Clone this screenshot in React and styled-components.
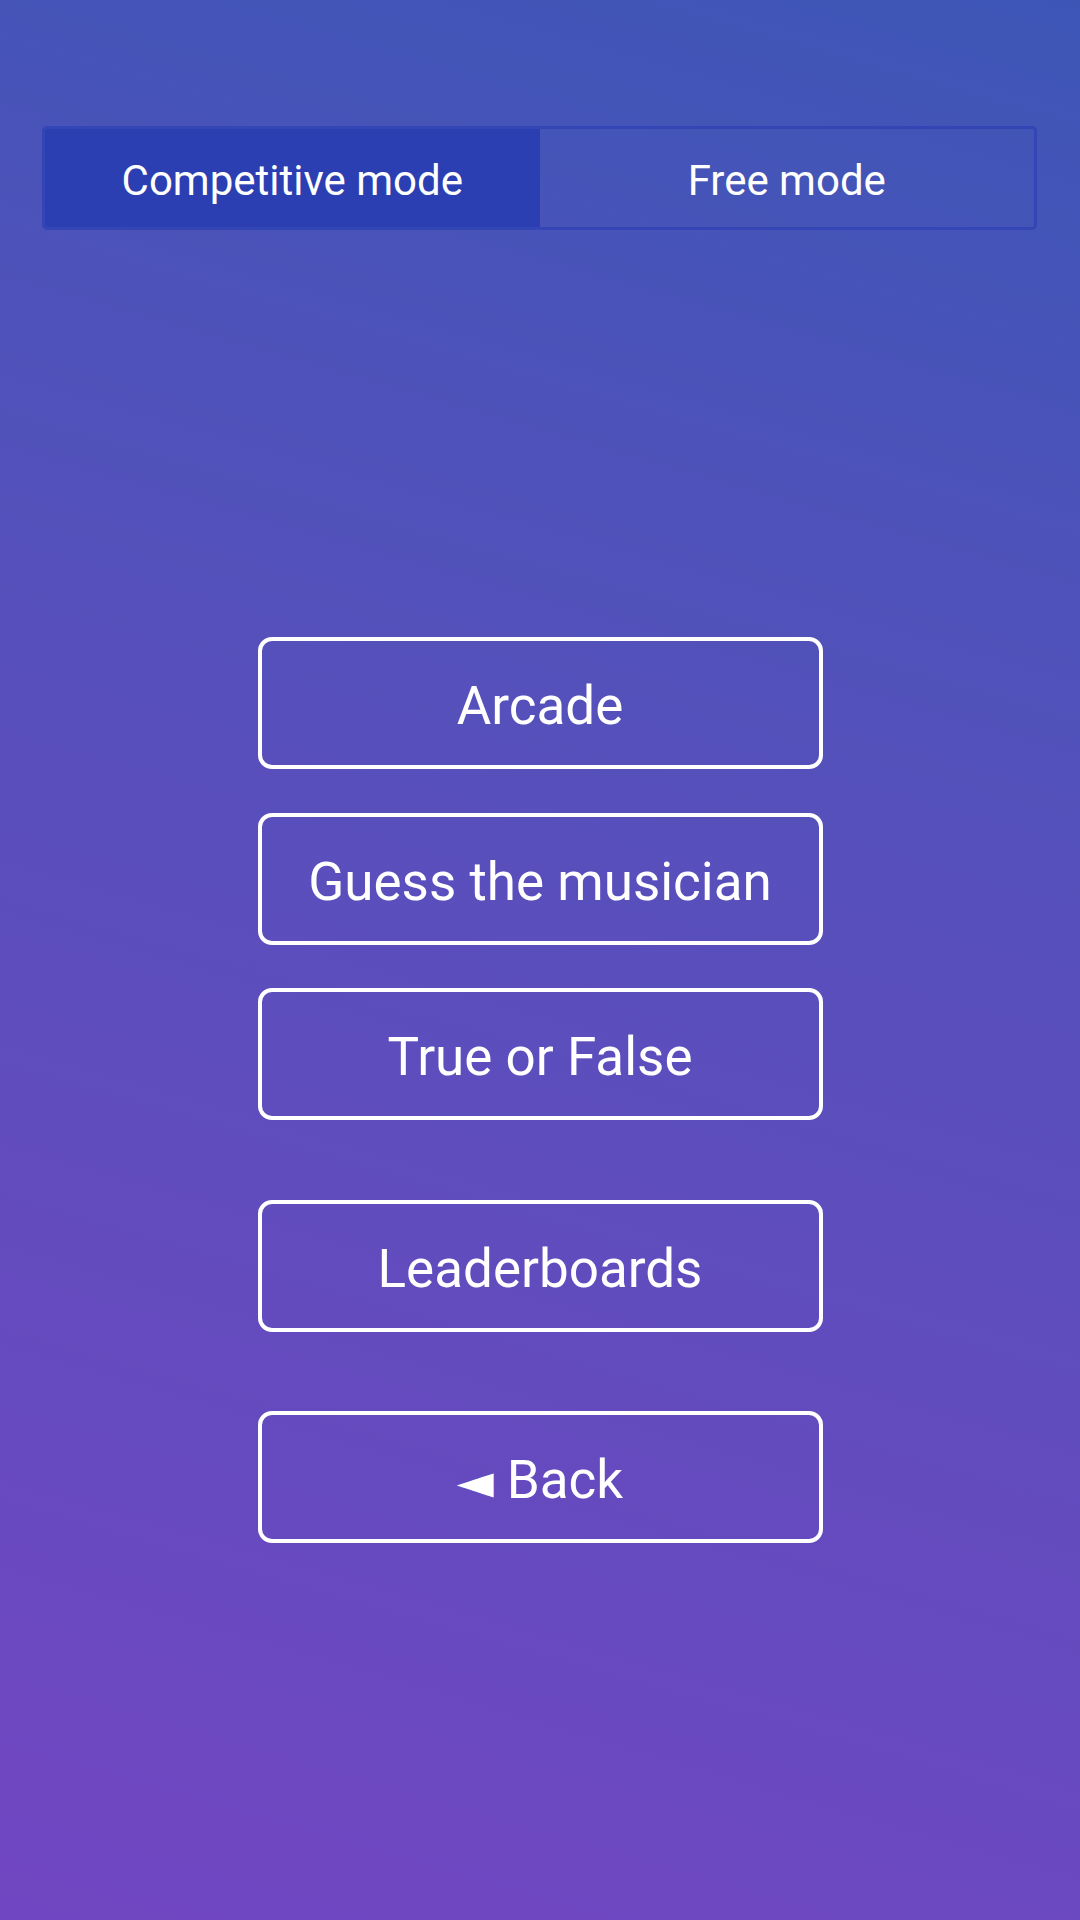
import React from "react";
import styled, { createGlobalStyle } from "styled-components";

const Global = createGlobalStyle`
  html, body { margin: 0; padding: 0; }
  body { font-family: Roboto, "Noto Sans", "DejaVu Sans", sans-serif; }
  * { box-sizing: border-box; }
`;

const Page = styled.div`
  width: 1080px;
  height: 1920px;
  background: linear-gradient(196deg, #3d56b6 0%, #5650bb 40%, #7146c2 100%);
  padding-top: 126px;
  display: flex;
  flex-direction: column;
  align-items: center;
  overflow: hidden;
`;

const Tabs = styled.div`
  width: 995px;
  height: 104px;
  margin-left: -1px;
  display: flex;
  border: 3px solid #3446b6;
  border-radius: 5px;
  overflow: hidden;
`;

const Tab = styled.div`
  flex: 1;
  display: flex;
  align-items: center;
  justify-content: center;
  padding-top: 4px;
  color: #ffffff;
  font-family: Roboto, sans-serif;
  font-size: 42px;
  background: ${(p) => (p.$active ? "#2b3fb3" : "transparent")};
`;

const Menu = styled.div`
  margin-top: 407px;
  display: flex;
  flex-direction: column;
  align-items: center;
`;

const Button = styled.div`
  width: 565px;
  height: 132px;
  margin-top: ${(p) => p.$gap}px;
  padding-top: 5px;
  border: 4px solid #ffffff;
  border-radius: 14px;
  display: flex;
  align-items: center;
  justify-content: center;
  color: #ffffff;
  font-family: Roboto, sans-serif;
  font-size: 53px;
`;

const Arrow = styled.span`
  font-family: "DejaVu Sans", sans-serif;
  font-size: 48px;
  margin-right: 13px;
  position: relative;
  top: 1px;
`;

export default function App() {
  return (
    <>
      <Global />
      <Page>
        <Tabs>
          <Tab $active>Competitive mode</Tab>
          <Tab>Free mode</Tab>
        </Tabs>
        <Menu>
          <Button $gap={0}>Arcade</Button>
          <Button $gap={44}>Guess the musician</Button>
          <Button $gap={43}>True or False</Button>
          <Button $gap={80}>Leaderboards</Button>
          <Button $gap={79}>
            <Arrow>◄</Arrow>Back
          </Button>
        </Menu>
      </Page>
    </>
  );
}
